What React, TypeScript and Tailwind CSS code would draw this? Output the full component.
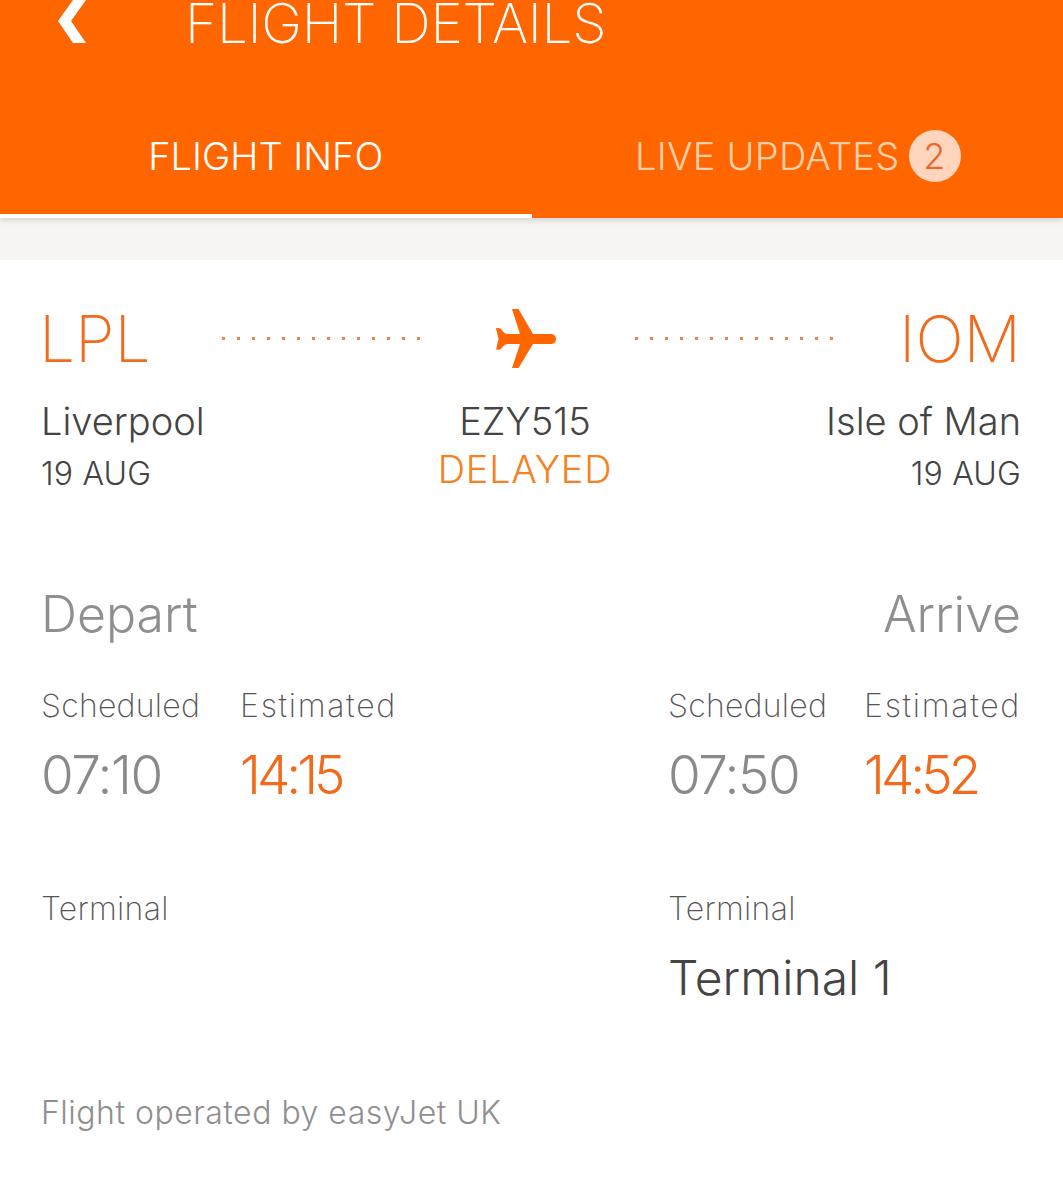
import React from "react";

const font = "font-['Inter','Liberation_Sans',sans-serif]";

const Dots: React.FC = () => (
  <div className="h-[3px] w-[198px] shrink-0 bg-[repeating-linear-gradient(90deg,#ee8454_0_3px,transparent_3px_15px)]" />
);

const Chevron: React.FC = () => (
  <svg viewBox="0 0 28 43" className="h-[43px] w-[28px] shrink-0">
    <path d="M0 21 15 0H28L13 21 28 43H15z" fill="#fff" />
  </svg>
);

const Plane: React.FC = () => (
  <svg viewBox="0 0 60 59" className="h-[59px] w-[60px]">
    <path
      d="M16 0H22.500L37 25H54C58 25 60 27 60 30C60 33 58 35 54 35H37L22.500 59H16L24 35H12C9 35 7 37 5 40Q3 41 0 40.500L2.500 30L0 19Q3 18.500 5 20C7 23 9 25 12 25H24Z"
      fill="#ff6600"
    />
  </svg>
);

const TimeColumn: React.FC<{
  label: string;
  time: string;
  accent?: boolean;
}> = ({ label, time, accent }) => (
  <div className="flex flex-col">
    <span
      className={`text-[32px] leading-[40px] font-[250] text-[#555] ${
        accent ? "tracking-[1.7px]" : "tracking-[0.25px]"
      }`}
    >
      {label}
    </span>
    <span
      className={`mt-[19px] text-[53px] leading-[60px] font-[350] ${
        accent ? "tracking-[-4px] text-[#f26a1b]" : "tracking-[-1.5px] text-[#8a8a8a]"
      }`}
    >
      {time}
    </span>
  </div>
);

export default function App() {
  return (
    <div className={`min-h-[1200px] w-full overflow-hidden bg-white ${font}`}>
      <header className="relative z-10 h-[218px] bg-[#ff6600] shadow-[0_2px_6px_rgba(0,0,0,0.15)]">
        <div className="flex h-[46px] items-start pl-[58px]">
          <Chevron />
          <h1 className="ml-[99px] text-[55px] leading-[46px] font-extralight tracking-[-0.3px] whitespace-nowrap text-white">
            FLIGHT DETAILS
          </h1>
        </div>
        <div className="grid h-[172px] grid-cols-2">
          <div className="flex items-center justify-center border-b-4 border-white pt-[52px] text-[38px] font-light text-white">
            FLIGHT INFO
          </div>
          <div className="flex items-center justify-center border-b-4 border-transparent pt-[52px] pl-[1px] text-[38px] font-light tracking-[0.25px] text-[#ffcfa9]">
            LIVE UPDATES
            <span className="ml-[9px] flex h-[52px] w-[52px] items-center justify-center rounded-full bg-[#ffd6bd] text-[36px] text-[#e8682a]">
              2
            </span>
          </div>
        </div>
      </header>
      <div className="h-[42px] bg-[#f6f5f1]" />
      <main className="pr-[42px] pl-[41px]">
        <section className="grid grid-cols-[181px_195px_218px_195px_191px] pt-[40px]">
          <span className="-ml-[2px] pt-[1px] text-[64px] leading-[75px] font-extralight text-[#f26a1b]">LPL</span>
          <div className="flex items-center">
            <Dots />
          </div>
          <div className="flex items-center justify-center">
            <Plane />
          </div>
          <div className="flex items-center">
            <Dots />
          </div>
          <span className="pt-[1px] text-right text-[64px] leading-[75px] font-extralight text-[#f26a1b]">IOM</span>

          <div className="col-span-2 mt-[20px] flex flex-col">
            <span className="text-[38px] leading-[50px] font-light text-[#444]">Liverpool</span>
            <span className="mt-[3px] text-[32px] leading-[50px] font-light tracking-[0.2px] text-[#444]">19 AUG</span>
          </div>
          <div className="mt-[20px] flex flex-col items-center pr-[2px]">
            <span className="text-[38px] leading-[50px] font-light text-[#444]">EZY515</span>
            <span className="text-[38px] leading-[46px] font-[350] tracking-[0.7px] text-[#f58220]">DELAYED</span>
          </div>
          <div className="col-span-2 mt-[20px] flex flex-col items-end">
            <span className="text-[38px] leading-[50px] font-light text-[#444]">Isle of Man</span>
            <span className="mt-[3px] text-[32px] leading-[50px] font-light tracking-[0.2px] text-[#444]">19 AUG</span>
          </div>
        </section>
        <section className="mt-[85px] flex justify-between">
          <div className="flex flex-col">
            <span className="text-[50px] leading-[60px] font-light text-[#8f8f8f]">Depart</span>
            <div className="mt-[42px] flex gap-[40px]">
              <TimeColumn label="Scheduled" time="07:10" />
              <TimeColumn label="Estimated" time="14:15" accent />
            </div>
            <span className="mt-[84px] text-[32px] leading-[40px] font-[250] tracking-[0.3px] text-[#555]">Terminal</span>
          </div>
          <div className="flex w-[353px] flex-col">
            <span className="self-end text-[50px] leading-[60px] font-light text-[#8f8f8f]">Arrive</span>
            <div className="mt-[42px] flex justify-between">
              <TimeColumn label="Scheduled" time="07:50" />
              <TimeColumn label="Estimated" time="14:52" accent />
            </div>
            <span className="mt-[84px] text-[32px] leading-[40px] font-[250] tracking-[0.3px] text-[#555]">Terminal</span>
            <span className="mt-[19px] text-[48px] leading-[60px] font-[350] text-[#444]">Terminal 1</span>
          </div>
        </section>
        <p className="mt-[85px] text-[32px] leading-[40px] font-light tracking-[0.5px] text-[#8f8f8f]">
          Flight operated by easyJet UK
        </p>
      </main>
    </div>
  );
}
